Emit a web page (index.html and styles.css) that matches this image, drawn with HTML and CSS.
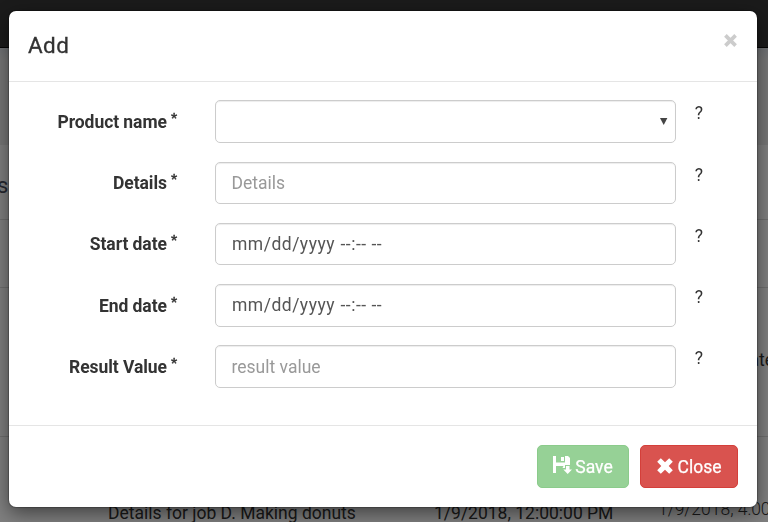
FILE: index.html
```html
<!DOCTYPE html>
<html lang="en">
<head>
<meta charset="utf-8">
<title>Add</title>
<link rel="stylesheet" href="styles.css">
</head>
<body>
<div class="page">
  <div class="navbar"></div>
  <div class="banner"></div>
  <div class="row row-head"><span class="cell-head">s</span></div>
  <div class="row row-empty"></div>
  <div class="row row-mid"><span class="cell-date">Date</span></div>
  <div class="row row-last">
    <span class="cell-details">Details for job D. Making donuts</span>
    <span class="cell-start">1/9/2018, 12:00:00 PM</span>
    <span class="cell-end">1/9/2018, 4:00:00 PM</span>
  </div>
</div>
<div class="backdrop">
  <div class="modal">
    <div class="modal-header">
      <h4 class="title">Add</h4>
      <svg class="dismiss" viewBox="0 0 12 12"><path d="M1.300 1.300l9.400 9.400M10.700 1.300l-9.400 9.400"/></svg>
    </div>
    <form class="modal-body">
      <div class="group">
        <label class="label"><span>Product name</span> <sup>*</sup></label>
        <div class="control select"><svg class="arrow" viewBox="0 0 8 7"><path d="M0 0h7.400L3.700 7z"/></svg></div>
        <span class="help">?</span>
      </div>
      <div class="group">
        <label class="label"><span>Details</span> <sup>*</sup></label>
        <input class="control" type="text" placeholder="Details">
        <span class="help">?</span>
      </div>
      <div class="group">
        <label class="label"><span>Start date</span> <sup>*</sup></label>
        <div class="control date"><span>mm/dd/yyyy</span><span class="time">--:-- --</span></div>
        <span class="help">?</span>
      </div>
      <div class="group">
        <label class="label"><span>End date</span> <sup>*</sup></label>
        <div class="control date"><span>mm/dd/yyyy</span><span class="time">--:-- --</span></div>
        <span class="help">?</span>
      </div>
      <div class="group">
        <label class="label"><span>Result Value</span> <sup>*</sup></label>
        <input class="control" type="text" placeholder="result value">
        <span class="help">?</span>
      </div>
    </form>
    <div class="modal-footer">
      <button class="btn btn-save" type="button"><svg class="icon icon-save" viewBox="0 0 19 19"><path d="M0 0H3V6.500H12V0H15L17 2V9H12V12H9.500L10.500 10H3V17H0zM8 1H11V5H8zM13 10H16.500V13.500H19L14.700 18L10.300 13.500H13z"/></svg><span>Save</span></button>
      <button class="btn btn-close" type="button"><svg class="icon icon-close" viewBox="0 0 16 16"><path d="M3.800 .2L8 4.300L12.200 .2L15.800 3.800L11.700 8L15.800 12.200L12.200 15.800L8 11.700L3.800 15.800L.2 12.200L4.300 8L.2 3.800z"/></svg><span>Close</span></button>
    </div>
  </div>
</div>
</body>
</html>
```
FILE: styles.css
```css
* { box-sizing: border-box; }
html, body { margin: 0; height: 100%; overflow: hidden; }
body { font: 17.5px/25px Roboto, sans-serif; color: #333; background: #fff; }
.page { height: 522px; overflow: hidden; }
.navbar { height: 48px; background: #363636; border-bottom: 1px solid #080808; }
.banner { height: 97px; background: linear-gradient(#dfe3e9, #eee 12px); }
.row { border-bottom: 1px solid #ddd; white-space: nowrap; overflow: hidden; }
.row-head { height: 75px; padding-top: 28px; font-size: 22px; color: #4a4f60; }
.cell-head { margin-left: -3px; }
.row-empty { height: 68px; }
.row-mid { height: 149px; padding: 60px 0 0 738px; }
.row-last { display: grid; grid-template-columns: 326px 225px 240px; padding: 64px 0 0 108px; height: 100px; }
.cell-end { margin: -4px 0 0 -1px; font-weight: 300; }
.backdrop { position: fixed; inset: 0; padding: 11px 11px 15px 9px; background: rgba(0,0,0,.5); }
.modal { display: flex; flex-direction: column; height: 496px; background: #fff; border-radius: 7px; box-shadow: 0 6px 19px rgba(0,0,0,.5), 0 0 1px 1px rgba(0,0,0,.25); }
.modal-header { display: flex; justify-content: space-between; height: 71px; padding: 18px 20px 0 19px; border-bottom: 1px solid #e5e5e5; }
.title { margin: 0; font-size: 22.500px; line-height: 32px; font-weight: 400; letter-spacing: .4px; -webkit-text-stroke: .3px #333; }
.dismiss { width: 13px; height: 13px; margin-top: 5px; stroke: #ccc; stroke-width: 3.400; fill: none; }
.modal-body { margin: 0; padding-top: 18.400px; height: 343px; }
.group { display: grid; grid-template-columns: 206px 461px 1fr; height: 42.500px; margin-bottom: 18.750px; }
.label { display: flex; justify-content: flex-end; gap: 4px; width: 168px; padding-top: 9.600px; font-weight: 700; letter-spacing: -.06px; white-space: nowrap; }
.label sup { font-size: 13.500px; line-height: 14px; vertical-align: top; -webkit-text-stroke: .3px #333; }
.control { width: 461px; height: 42.500px; padding: 7.500px 15.500px; border: 1px solid #ccc; border-radius: 5px; background: #fff; box-shadow: inset 0 1px 1px rgba(0,0,0,.075); font: 17.5px/25px Roboto, sans-serif; color: #555; }
.control::placeholder { color: #999; opacity: 1; }
.select { display: flex; justify-content: flex-end; align-items: center; padding-right: 7px; }
.arrow { width: 8px; height: 7px; fill: #444; }
.date { display: flex; gap: 5.500px; padding: 7.900px 0 0 16px; letter-spacing: .5px; }
.help { padding: .9px 0 0 18.800px; }
.modal-footer { display: flex; justify-content: flex-end; gap: 11px; height: 82px; padding: 19px 19px 0 0; border-top: 1px solid #e5e5e5; }
.btn { display: flex; align-items: center; justify-content: center; height: 43px; padding: 1px 0 0; border: 1px solid; border-radius: 5px; font: 17.5px/25px Roboto, sans-serif; color: #fff; -webkit-text-stroke: .25px #fff; }
.btn-save { width: 92px; gap: 3px; background: #96d196; border-color: #8bcb8b; }
.btn-close { width: 98px; gap: 5px; background: #d9534f; border-color: #d43f3a; }
.icon { fill: #fff; fill-rule: evenodd; margin-top: -3px; }
.icon-save { width: 19px; height: 19px; margin-top: -3px; }
.icon-close { width: 16px; height: 16px; }
```
